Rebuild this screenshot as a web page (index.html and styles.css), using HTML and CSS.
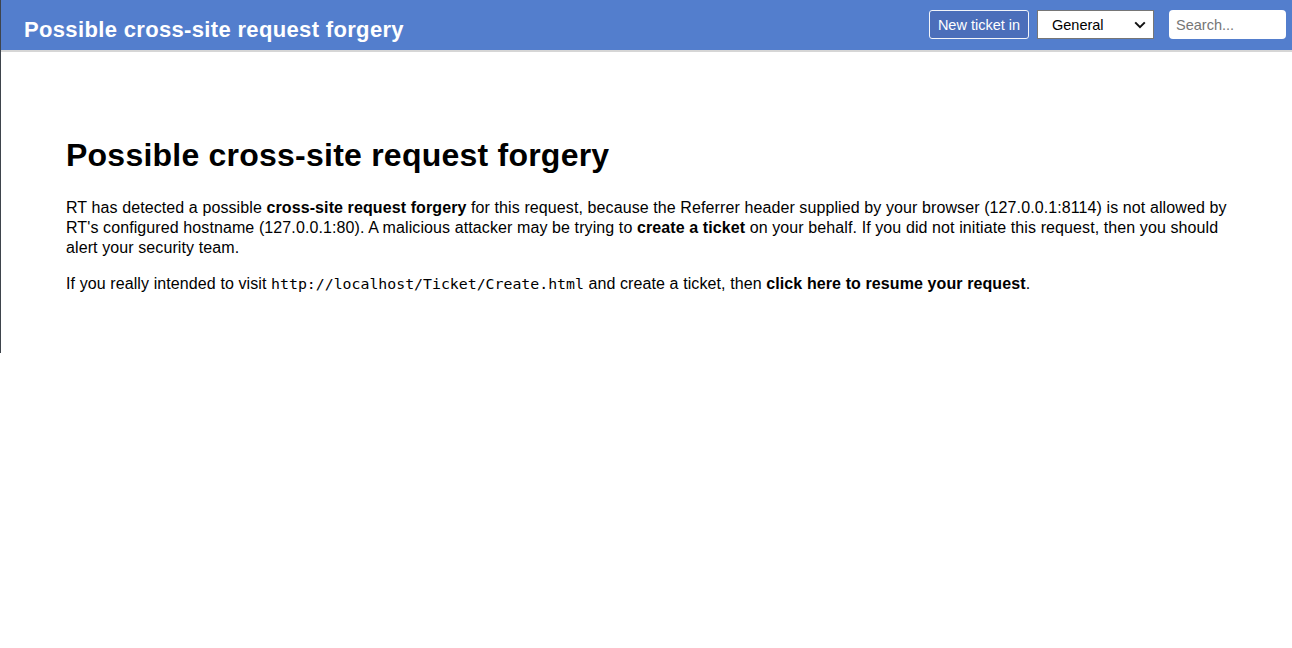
FILE: index.html
```html
<!DOCTYPE html>
<html>
<head>
<meta charset="utf-8">
<title>Possible cross-site request forgery</title>
<link rel="stylesheet" href="styles.css">
</head>
<body>
<div class="page">
  <header class="topbar">
    <div class="page-title">Possible cross-site request forgery</div>
    <div class="controls">
      <button class="new-ticket" type="button">New ticket in</button>
      <div class="select-wrap">
        <select class="queue">
          <option>General</option>
        </select>
        <svg class="chev" width="12" height="8" viewBox="0 0 12 8"><path d="M1.2 1.4 L6 6.2 L10.8 1.4" fill="none" stroke="#111" stroke-width="2"/></svg>
      </div>
      <input class="search" type="text" placeholder="Search...">
    </div>
  </header>
  <main class="content">
    <h1>Possible cross-site request forgery</h1>
    <p>RT has detected a possible <b>cross-site request forgery</b> for this request, because the Referrer header supplied by your browser (127.0.0.1:8114) is not allowed by RT's configured hostname (127.0.0.1:80). A malicious attacker may be trying to <b>create a ticket</b> on your behalf. If you did not initiate this request, then you should alert your security team.</p>
    <p>If you really intended to visit <tt>http://localhost/Ticket/Create.html</tt> and create a ticket, then <b>click here to resume your request</b>.</p>
  </main>
</div>
</body>
</html>
```
FILE: styles.css
```css
html, body {
  margin: 0;
  padding: 0;
  background: #fff;
}
body {
  font-family: "Liberation Sans", Arial, sans-serif;
  color: #000;
}
.page {
  border-left: 1px solid #3e444c;
  height: 353px;
  box-sizing: border-box;
}
.topbar {
  height: 50px;
  background: #537ecd;
  border-bottom: 2px solid #d6d6d6;
  display: flex;
  justify-content: space-between;
  align-items: flex-start;
}
.page-title {
  color: #fff;
  font-weight: bold;
  font-size: 22px;
  letter-spacing: 0.34px;
  line-height: 25px;
  padding: 17px 0 0 23px;
}
.controls {
  display: flex;
  align-items: flex-start;
  padding: 10px 6px 0 0;
}
.new-ticket {
  height: 29px;
  width: 100px;
  box-sizing: border-box;
  background: #4b6eba;
  color: #fff;
  border: 1px solid #f2f4fa;
  border-radius: 3px;
  font-family: "Liberation Sans", Arial, sans-serif;
  font-size: 14.5px;
  padding: 0;
  margin-right: 8px;
}
.select-wrap {
  position: relative;
  margin-right: 15px;
}
.queue {
  -webkit-appearance: none;
  appearance: none;
  width: 117px;
  height: 29px;
  box-sizing: border-box;
  border: 1px solid #767676;
  border-radius: 0;
  background: #fff;
  font-family: "Liberation Sans", Arial, sans-serif;
  font-size: 14.5px;
  color: #000;
  padding: 0 0 0 14px;
  margin: 0;
}
.chev {
  position: absolute;
  right: 8px;
  top: 11px;
  pointer-events: none;
}
.search {
  width: 117px;
  height: 29px;
  box-sizing: border-box;
  border: none;
  border-radius: 4px;
  background: #fff;
  font-family: "Liberation Sans", Arial, sans-serif;
  font-size: 14.5px;
  padding: 0 7px;
  margin: 0;
}
.search::placeholder {
  color: #767676;
}
.content {
  padding: 85px 60px 0 65px;
}
h1 {
  font-size: 32px;
  font-weight: bold;
  letter-spacing: 0.23px;
  line-height: 37px;
  margin: 0 0 24px;
}
p {
  font-size: 16px;
  letter-spacing: 0.1px;
  line-height: 20px;
  margin: 0 0 16px;
}
tt {
  font-family: "DejaVu Sans Mono", "Liberation Mono", monospace;
  font-size: 14.85px;
  letter-spacing: 0;
}
```
